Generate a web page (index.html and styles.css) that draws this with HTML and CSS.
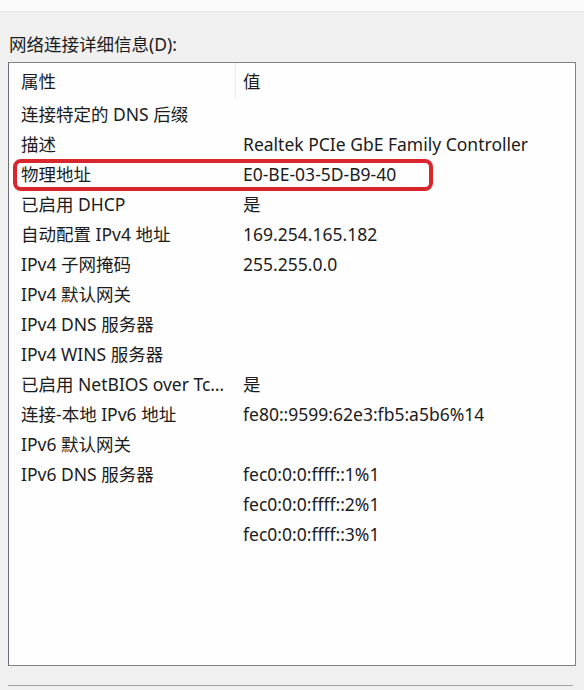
FILE: index.html
```html
<!DOCTYPE html>
<html lang="zh-CN">
<head>
    <meta charset="UTF-8">
    <title>网络连接详细信息</title>
    <link rel="stylesheet" href="styles.css">
</head>
<body>
    <div class="topstrip"></div>
    <div class="content">
        <div class="label">网络连接详细信息(D):</div>
        <div class="listbox">
            <div class="row header">
                <div class="col prop">属性</div>
                <div class="col val">值</div>
            </div>
            <div class="row"><div class="col prop">连接特定的 DNS 后缀</div><div class="col val"></div></div>
            <div class="row"><div class="col prop">描述</div><div class="col val">Realtek PCIe GbE Family Controller</div></div>
            <div class="row marked"><div class="col prop">物理地址</div><div class="col val">E0-BE-03-5D-B9-40</div></div>
            <div class="row"><div class="col prop">已启用 DHCP</div><div class="col val">是</div></div>
            <div class="row"><div class="col prop">自动配置 IPv4 地址</div><div class="col val">169.254.165.182</div></div>
            <div class="row"><div class="col prop">IPv4 子网掩码</div><div class="col val">255.255.0.0</div></div>
            <div class="row"><div class="col prop">IPv4 默认网关</div><div class="col val"></div></div>
            <div class="row"><div class="col prop">IPv4 DNS 服务器</div><div class="col val"></div></div>
            <div class="row"><div class="col prop">IPv4 WINS 服务器</div><div class="col val"></div></div>
            <div class="row"><div class="col prop">已启用 NetBIOS over Tcpip</div><div class="col val">是</div></div>
            <div class="row"><div class="col prop">连接-本地 IPv6 地址</div><div class="col val">fe80::9599:62e3:fb5:a5b6%14</div></div>
            <div class="row"><div class="col prop">IPv6 默认网关</div><div class="col val"></div></div>
            <div class="row"><div class="col prop">IPv6 DNS 服务器</div><div class="col val">fec0:0:0:ffff::1%1</div></div>
            <div class="row"><div class="col prop"></div><div class="col val">fec0:0:0:ffff::2%1</div></div>
            <div class="row"><div class="col prop"></div><div class="col val">fec0:0:0:ffff::3%1</div></div>
        </div>
        <div class="separator"></div>
    </div>
</body>
</html>
```

FILE: styles.css
```css
body {
    margin: 0;
    background-color: #f0f0f0;
    font-family: "Noto Sans", "Noto Sans CJK SC", sans-serif;
    font-size: 17.5px;
    color: #1b1b1b;
}

/* bande claire en haut (bord de l'onglet) */
.topstrip {
    height: 11px;
    background-color: #fafafa;
    border-bottom: 1px solid #e6e6e6;
}

.content {
    padding: 0 8px 0 8px;
}

.label {
    height: 50px;
    line-height: 22px;
    padding-top: 21px;
    box-sizing: border-box;
    padding-left: 1px;
}

.listbox {
    height: 602px;
    background-color: #fefeff;
    border: 1px solid #7f8288;
    border-left-color: #6b6e74;
}

.row {
    display: flex;
    height: 30px;
    line-height: 30px;
    position: relative;
}

.row.header {
    height: 36px;
    line-height: 36px;
}

.col {
    white-space: nowrap;
    overflow: hidden;
    text-overflow: ellipsis;
}

.prop {
    width: 226px;
    padding-left: 12px;
    padding-right: 6px;
    box-sizing: border-box;
    flex: none;
}

.val {
    padding-left: 8px;
}

.header .prop {
    border-right: 1px solid #ececec;
    width: 227px;
}

.header .val {
    padding-left: 7px;
}

/* cadre rouge autour de l'adresse physique */
.marked::after {
    content: "";
    position: absolute;
    left: 4px;
    top: 0;
    width: 420px;
    height: 32px;
    box-sizing: border-box;
    border: 4px solid #d8262c;
    border-radius: 8px;
}

.separator {
    margin-top: 19px;
    margin-right: 3px;
    border-top: 1px solid #a3a3a3;
}
```
